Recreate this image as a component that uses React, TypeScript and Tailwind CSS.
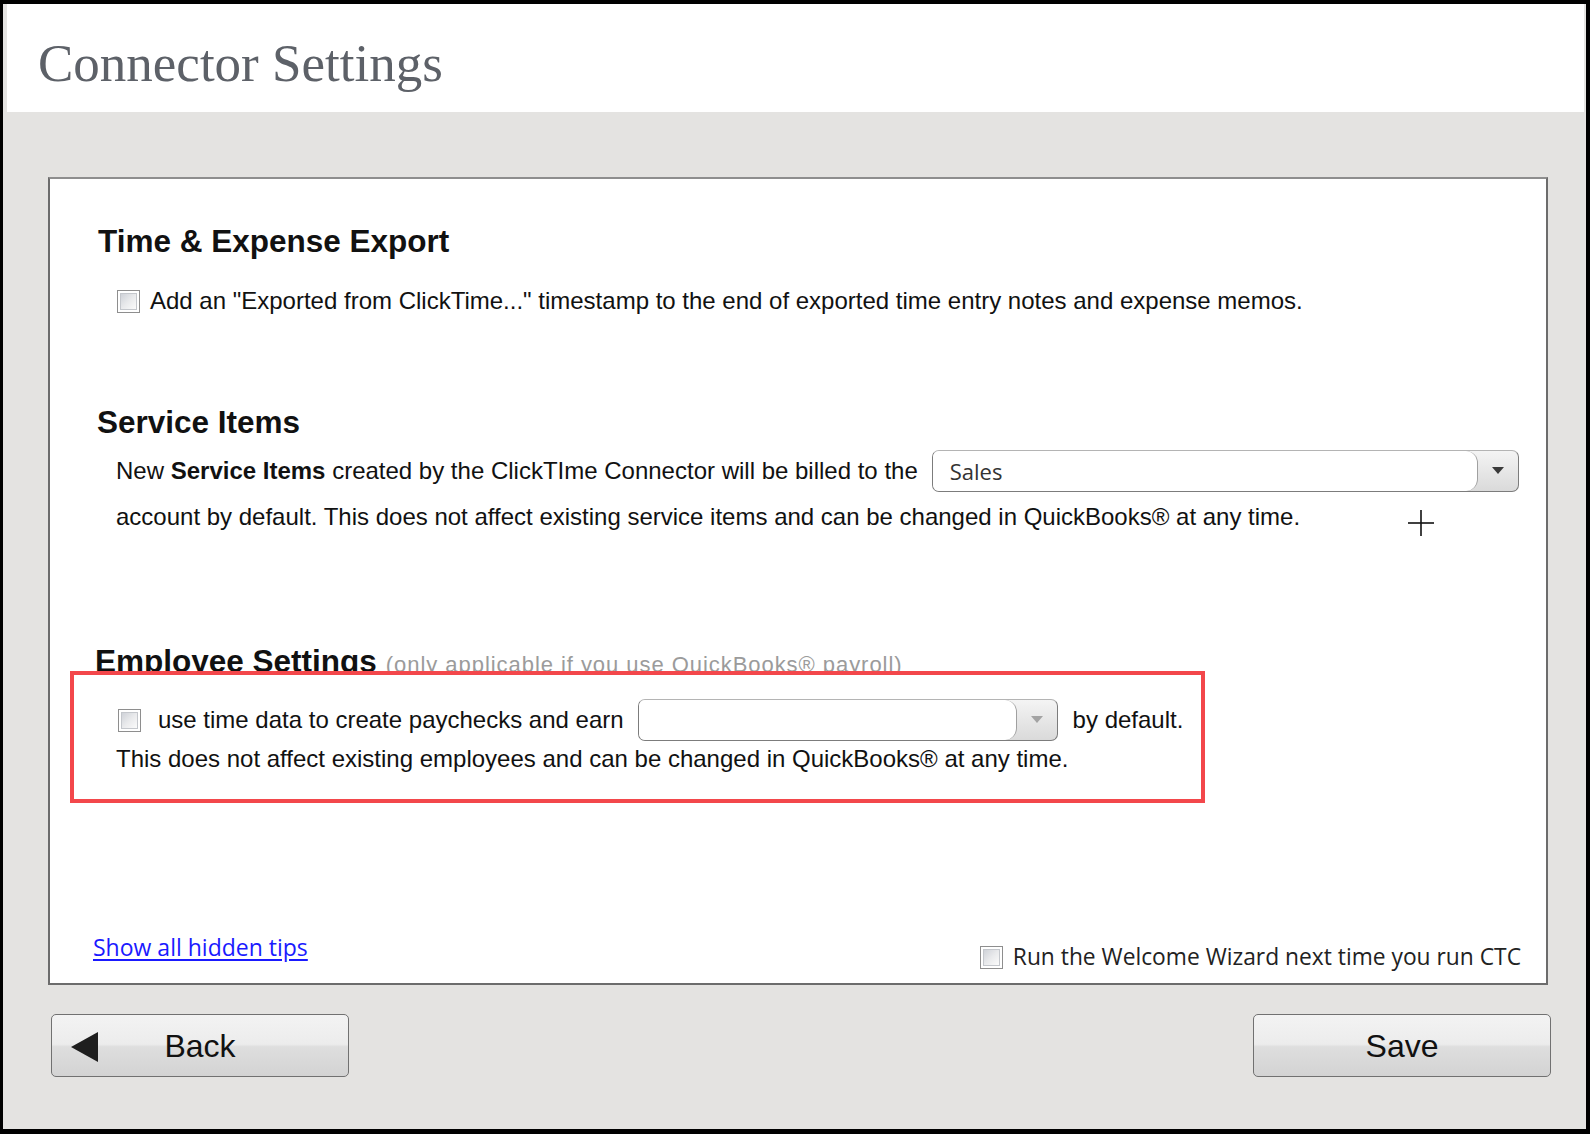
import React from "react";

const sans = "font-['Liberation_Sans',Arial,sans-serif]";
const ui = "font-['Open_Sans','Noto_Sans',sans-serif]";

function Checkbox() {
    return (
        <div className="w-[23px] h-[23px] shrink-0 border border-[#8e8e8e] bg-white p-[2px]">
            <div className="w-full h-full border border-[#c4c7cc] bg-gradient-to-br from-[#cfd2d8] via-[#e9eaec] to-[#fbfbfb]" />
        </div>
    );
}

function Select({ width, value, disabled }: { width: number; value?: string; disabled?: boolean }) {
    return (
        <div
            className="flex h-[42px] shrink-0 rounded-[7px] border border-[#7c7c7c] border-t-[#b4b4b4] bg-gradient-to-b from-[#f4f4f4] to-[#dadada] overflow-hidden"
            style={{ width }}
        >
            <div className={`flex flex-1 items-center rounded-r-[12px] border-r border-[#a0a0a0] bg-white pl-[17px] text-[22px] text-[#333] ${ui}`}>
                {value}
            </div>
            <div className="flex w-[40px] items-center justify-center">
                <svg width="12" height="8" viewBox="0 0 12 8">
                    <polygon points="0,0 12,0 6,7" fill={disabled ? "#a3a3a3" : "#3a3a3a"} />
                </svg>
            </div>
        </div>
    );
}

function Heading({ children }: { children: React.ReactNode }) {
    return <h2 className={`text-[31.5px] leading-[36px] font-bold text-[#111] ${sans}`}>{children}</h2>;
}

export default function App() {
    return (
        <div className="w-[1590px] h-[1134px] flex flex-col border-black border-t-4 border-l-[3px] border-r-4 border-b-[5px] bg-[#e4e3e1]">
            {/* title bar */}
            <div className="ml-[4px] mr-[2px] h-[108px] bg-white pl-[31px] pt-[33px]">
                <h1 className="font-['Liberation_Serif','Times_New_Roman',serif] text-[53px] leading-[53px] text-[#5d6168]">
                    Connector Settings
                </h1>
            </div>

            {/* settings panel */}
            <div className={`relative mt-[65px] ml-[45px] flex h-[808px] w-[1500px] flex-col border-2 border-[#6c6c6c] border-t-[#8e8e8e] bg-white text-[24px] leading-[28px] text-[#111] ${sans}`}>
                <div className="ml-[48px] mt-[44px]">
                    <Heading>Time &amp; Expense Export</Heading>
                </div>
                <div className="ml-[67px] mt-[28px] flex h-[28px] items-center gap-[10px]">
                    <Checkbox />
                    <span>Add an "Exported from ClickTime..." timestamp to the end of exported time entry notes and expense memos.</span>
                </div>

                <div className="ml-[47px] mt-[89px]">
                    <Heading>Service Items</Heading>
                </div>
                <div className="ml-[66px] mt-[9px] flex h-[43px] items-center">
                    <span>
                        New <b>Service Items</b> created by the ClickTIme Connector will be billed to the
                    </span>
                    <div className="ml-[14px]">
                        <Select width={587} value="Sales" />
                    </div>
                </div>
                <div className="ml-[66px] mt-[11px]">
                    account by default. This does not affect existing service items and can be changed in QuickBooks® at any time.
                </div>

                {/* mouse cursor */}
                <svg className="absolute left-[1358px] top-[331px]" width="26" height="26" viewBox="0 0 26 26">
                    <line x1="13" y1="0" x2="13" y2="26" stroke="#111" strokeWidth="1.6" />
                    <line x1="0" y1="13" x2="26" y2="13" stroke="#111" strokeWidth="1.6" />
                </svg>

                <div className="ml-[45px] mt-[112px] flex h-[28px] items-baseline overflow-hidden">
                    <Heading>Employee Settings</Heading>
                    <span className="ml-[9px] text-[22px] tracking-[0.95px] text-[#9b9b9b]">
                        (only applicable if you use QuickBooks® payroll)
                    </span>
                </div>
                <div className="ml-[20px] h-[132px] w-[1135px] border-4 border-[#f3474b] bg-white">
                    <div className="ml-[44px] mt-[24px] flex h-[42px] items-center">
                        <Checkbox />
                        <span className="ml-[17px]">use time data to create paychecks and earn</span>
                        <div className="ml-[14px]">
                            <Select width={420} disabled />
                        </div>
                        <span className="ml-[15px]">by default.</span>
                    </div>
                    <div className="ml-[42px] mt-[4px]">
                        This does not affect existing employees and can be changed in QuickBooks® at any time.
                    </div>
                </div>

                <div className={`mt-auto flex items-start justify-between pb-[11px] pl-[43px] pr-[25px] text-[23px] leading-[30px] ${ui}`}>
                    <a href="#" className="text-[#1a1aff] underline underline-offset-[3px]">
                        Show all hidden tips
                    </a>
                    <div className="mt-[10px] flex items-center gap-[10px] text-[#222]">
                        <Checkbox />
                        <span className="text-[22.8px]">Run the Welcome Wizard next time you run CTC</span>
                    </div>
                </div>
            </div>

            {/* buttons */}
            <div className={`mt-[29px] ml-[48px] mr-[35px] flex justify-between text-[32px] text-[#111] ${sans}`}>
                <button className="relative flex h-[63px] w-[298px] items-center justify-center rounded-[5px] border border-[#717171] bg-[linear-gradient(to_bottom,#f3f3f3_0%,#ececec_48%,#dedede_52%,#d3d3d3_100%)]">
                    <svg className="absolute left-[19px] top-[17px]" width="27" height="30" viewBox="0 0 27 30">
                        <polygon points="27,0 27,30 0,15" fill="#1e1e1e" />
                    </svg>
                    Back
                </button>
                <button className="flex h-[63px] w-[298px] items-center justify-center rounded-[5px] border border-[#717171] bg-[linear-gradient(to_bottom,#f3f3f3_0%,#ececec_48%,#dedede_52%,#d3d3d3_100%)]">
                    Save
                </button>
            </div>
        </div>
    );
}
